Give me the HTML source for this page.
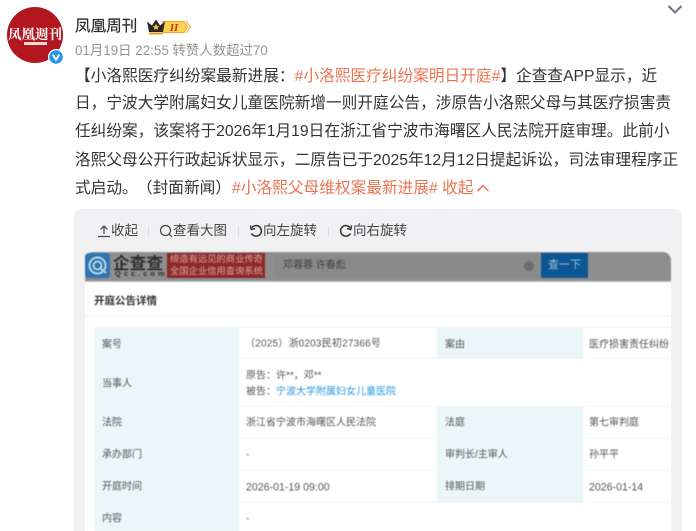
<!DOCTYPE html>
<html lang="zh"><head><meta charset="utf-8">
<style>
html,body{margin:0;padding:0;background:#fff;width:696px;height:531px;overflow:hidden}
body{font-family:"Liberation Sans","Noto Sans CJK SC",sans-serif}
#root{position:absolute;left:0;top:0;width:696px;height:531px;overflow:hidden;background:#fff}
.a{position:absolute;white-space:nowrap}
.l{left:75px;font-size:15.7px;line-height:28px;height:28px;color:#333}
.o{color:#eb7350}
.tb{top:221px;font-size:13.5px;line-height:20px;color:#444}
.sep{position:absolute;top:226px;width:1px;height:11px;background:#ddd}
.bg{position:absolute;background:#eaf6f8}
.t{position:absolute;white-space:nowrap;font-size:10px;line-height:14px;color:#555;transform:translateY(1.5px)}
.d{font-size:10.6px}
.rule{position:absolute;width:577px;height:1px;background:#edf5f7}
</style></head><body>
<div id="root">

<!-- avatar -->
<div class="a" style="left:7px;top:7px;width:56px;height:56px;border-radius:50%;background:#b2171f;overflow:hidden">
  <div class="a" style="left:0;width:56px;top:16px;text-align:center;font:bold 13.5px/20px 'Noto Serif CJK SC',serif;color:#fff">凤凰週刊</div>
  <div class="a" style="left:17px;top:35px;width:23px;height:3px;background:#fff;opacity:.85"></div>
</div>
<svg class="a" style="left:48px;top:49px" width="16" height="16" viewBox="0 0 16 16"><circle cx="8" cy="8" r="8" fill="#fff"/><circle cx="8" cy="8" r="6.8" fill="#2a93ea"/><path d="M4.8 5.6L8 10.8L11.2 5.6" fill="none" stroke="#fff" stroke-width="1.8"/></svg>

<!-- name -->
<div class="a" style="left:75px;top:16px;font-size:15.6px;line-height:22px;color:#2d2d2d;-webkit-text-stroke:.2px #2d2d2d">凤凰周刊</div>
<svg class="a" style="left:146px;top:18px" width="46" height="18" viewBox="0 0 46 18">
  <path d="M17 3.5H38L41.5 9L38 14.5H17Z" fill="#fcd24e" stroke="#f0a32a" stroke-width="1"/>
  <path d="M40 3L44.5 9L40 15" fill="none" stroke="#f3b04a" stroke-width="1.2"/>
  <path d="M1 3.5L6 7.5L10 1.5L14 7.5L19 3.5L17 14H3Z" fill="#2b2622"/>
  <path d="M3 15.5H17" stroke="#d9a021" stroke-width="2"/>
  <path d="M10 5.5L11 8L13.4 8.1L11.5 9.7L12.2 11.9L10 10.7L7.8 11.9L8.5 9.7L6.6 8.1L9 8Z" fill="#f5c33c"/>
  <text x="28" y="13" font-family="Liberation Serif,serif" font-style="italic" font-weight="bold" font-size="11" fill="#c8391f" text-anchor="middle">II</text>
</svg>

<!-- meta -->
<div class="a" style="left:75px;top:42px;font-size:13.4px;line-height:18px;color:#939393">01月19日 22:55 转赞人数超过70</div>

<!-- chevron -->
<svg class="a" style="left:667px;top:3px" width="16" height="12" viewBox="0 0 16 12"><path d="M1.5 3L8 9.5L14.5 3" fill="none" stroke="#6b7280" stroke-width="2"/></svg>

<!-- text -->
<div class="a l" style="top:63px">【小洛熙医疗纠纷案最新进展：<span class="o">#小洛熙医疗纠纷案明日开庭#</span>】企查查APP显示，近</div>
<div class="a l" style="top:90px">日，宁波大学附属妇女儿童医院新增一则开庭公告，涉原告小洛熙父母与其医疗损害责</div>
<div class="a l" style="top:118px">任纠纷案，该案将于2026年1月19日在浙江省宁波市海曙区人民法院开庭审理。此前小</div>
<div class="a l" style="top:147px">洛熙父母公开行政起诉状显示，二原告已于2025年12月12日提起诉讼，司法审理程序正</div>
<div class="a l" style="top:175px">式启动。<span style="margin-left:7px">（封面新闻）</span><span class="o" style="margin-left:1px">#小洛熙父母维权案最新进展# 收起</span></div>
<svg class="a" style="left:476px;top:183px" width="14" height="10" viewBox="0 0 14 10"><path d="M1.5 8L7 2.5L12.5 8" fill="none" stroke="#eb7350" stroke-width="1.5"/></svg>

<!-- gallery -->
<div class="a" style="left:74px;top:209px;width:608px;height:340px;background:#f1f1f4;border-radius:7px"></div>

<svg class="a" style="left:97px;top:224px" width="14" height="14" viewBox="0 0 14 14"><path d="M7 10V2M3.5 5.5L7 2L10.5 5.5M1 12.5H13" fill="none" stroke="#444" stroke-width="1.2"/></svg>
<div class="a tb" style="left:111px">收起</div>
<div class="sep" style="left:148px"></div>
<svg class="a" style="left:159px;top:224px" width="14" height="14" viewBox="0 0 14 14"><circle cx="6.5" cy="6.5" r="5" fill="none" stroke="#444" stroke-width="1.2"/><path d="M10 10L13 13" stroke="#444" stroke-width="1.2"/></svg>
<div class="a tb" style="left:173px">查看大图</div>
<div class="sep" style="left:238px"></div>
<svg class="a" style="left:249px;top:224px" width="14" height="14" viewBox="0 0 14 14"><path d="M3 3.5A5.3 5.3 0 1 1 2.5 9.5" fill="none" stroke="#333" stroke-width="1.5"/><path d="M1.5 1.5L2.2 5.5L6 4.5" fill="none" stroke="#333" stroke-width="1.5"/></svg>
<div class="a tb" style="left:263px">向左旋转</div>
<div class="sep" style="left:328px"></div>
<svg class="a" style="left:339px;top:224px" width="14" height="14" viewBox="0 0 14 14"><path d="M11 3.5A5.3 5.3 0 1 0 11.5 9.5" fill="none" stroke="#333" stroke-width="1.5"/><path d="M12.5 1.5L11.8 5.5L8 4.5" fill="none" stroke="#333" stroke-width="1.5"/></svg>
<div class="a tb" style="left:353px">向右旋转</div>

<!-- image -->
<div class="a" style="left:85px;top:252px;width:586px;height:279px;background:#fff;overflow:hidden;border-radius:8px 8px 0 0"></div>
<div class="a" style="left:85px;top:252px;width:586px;height:279px;overflow:hidden;filter:blur(.4px)">
  <div class="a" style="left:0;top:0;width:586px;height:29px;background:#8e8e8e;border-radius:8px 8px 0 0;border-bottom:1px solid #c4c4c4"></div>
  <!-- logo -->
  <div class="a" style="left:0;top:1px;width:25px;height:25px;background:#2f74b2;border-radius:4px"></div>
  <svg class="a" style="left:1px;top:2px" width="23" height="23" viewBox="0 0 23 23"><circle cx="11.5" cy="11.5" r="8" fill="none" stroke="#b6d7e8" stroke-width="2"/><circle cx="11.5" cy="11.5" r="4" fill="none" stroke="#d5e7ef" stroke-width="1.6"/><path d="M15 15L20 19" stroke="#b6d7e8" stroke-width="2"/></svg>
  <div class="a" style="left:28px;top:1px;font:bold 16.7px/18px 'Noto Sans CJK SC',sans-serif;color:#2e2e2e">企查查</div>
  <div class="a" style="left:30px;top:17px;font:bold 7.5px/10px 'Liberation Sans',sans-serif;letter-spacing:3px;color:#2e2e2e">Qcc.com</div>
  <div class="a" style="left:82px;top:1px;width:98px;height:25px;background:#8e2a2a"></div>
  <div class="a" style="left:85px;top:2px;font-size:9.3px;line-height:11.5px;color:#d9a9a3">缔造有远见的商业传奇<br>全国企业信用查询系统</div>
  <div class="a" style="left:190px;top:3px;width:266px;height:23px;background:#8a8a8a"></div>
  <div class="a" style="left:198px;top:6px;font-size:10px;line-height:16px;color:#3d3d3d">邓蓉蓉 许春彪</div>
  <div class="a" style="left:439px;top:9px;width:10px;height:10px;border-radius:50%;background:#6d6d6d"></div>
  <div class="a" style="left:456px;top:1px;width:47px;height:25px;background:#0c5693;color:#9cc0dc;font-size:11px;line-height:25px;text-align:center">查一下</div>

  <div class="a" style="left:9px;top:40.5px;font-size:10.5px;line-height:16px;font-weight:bold;color:#333">开庭公告详情</div>
  <div class="a" style="left:0;top:63px;width:586px;height:2px;background:#f6f6f6"></div>

  <!-- table -->
  <div class="bg" style="left:9px;top:75px;width:145px;height:204px"></div>
  <div class="bg" style="left:352px;top:75px;width:146px;height:31px"></div>
  <div class="bg" style="left:352px;top:154px;width:146px;height:96px"></div>
  <div class="rule" style="left:9px;top:75px"></div>
  <div class="rule" style="left:9px;top:106px"></div>
  <div class="rule" style="left:9px;top:154px"></div>
  <div class="rule" style="left:9px;top:186px"></div>
  <div class="rule" style="left:9px;top:218px"></div>
  <div class="rule" style="left:9px;top:250px"></div>

  <div class="t" style="left:17px;top:85px">案号</div>
  <div class="t" style="left:17px;top:124px">当事人</div>
  <div class="t" style="left:17px;top:163px">法院</div>
  <div class="t" style="left:17px;top:195px">承办部门</div>
  <div class="t" style="left:17px;top:227px">开庭时间</div>
  <div class="t" style="left:17px;top:259px">内容</div>

  <div class="t" style="left:160px;top:84px;letter-spacing:.2px">（2025）浙0203民初27366号</div>
  <div class="t" style="left:161px;top:116px">原告：许**，邓**</div>
  <div class="t" style="left:161px;top:132px">被告：<span style="color:#2c97de">宁波大学附属妇女儿童医院</span></div>
  <div class="t" style="left:161px;top:163px">浙江省宁波市海曙区人民法院</div>
  <div class="t" style="left:161px;top:195px">-</div>
  <div class="t d" style="left:161px;top:227px">2026-01-19 09:00</div>
  <div class="t" style="left:161px;top:259px">-</div>

  <div class="t" style="left:360px;top:85px">案由</div>
  <div class="t" style="left:360px;top:163px">法庭</div>
  <div class="t" style="left:360px;top:195px">审判长/主审人</div>
  <div class="t" style="left:360px;top:227px">排期日期</div>

  <div class="t" style="left:504px;top:85px">医疗损害责任纠纷</div>
  <div class="t" style="left:504px;top:163px">第七审判庭</div>
  <div class="t" style="left:504px;top:195px">孙平平</div>
  <div class="t d" style="left:504px;top:227px">2026-01-14</div>
</div>
</div>
</body></html>
